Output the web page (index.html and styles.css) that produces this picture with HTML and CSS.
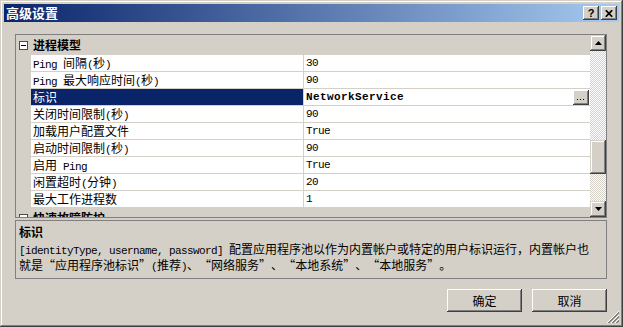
FILE: index.html
```html
<!DOCTYPE html>
<html lang="zh-CN">
<head>
<meta charset="utf-8">
<title>高级设置</title>
<link rel="stylesheet" href="styles.css">
</head>
<body>
<div class="window">
  <div class="titlebar">
    <span class="title">高级设置</span>
    <div class="tbtns">
      <div class="tbtn help">?</div>
      <div class="tbtn close">
        <svg width="8" height="7" viewBox="0 0 8 7"><path d="M0.8 0.2L7.2 6.8M7.2 0.2L0.8 6.8" stroke="#000" stroke-width="1.7" fill="none"/></svg>
      </div>
    </div>
  </div>
  <div class="content">
    <div class="grid">
      <div class="rows">
        <div class="cat">
          <svg class="toggle" width="9" height="9" viewBox="0 0 9 9"><rect x="0.5" y="0.5" width="8" height="8" fill="#fff" stroke="#4a4a4a"/><path d="M2 4.5h5" stroke="#000"/></svg>
          <span class="cat-name">进程模型</span>
        </div>
        <div class="row"><div class="gutter"></div><div class="label"><span class="lat">Ping </span>间隔<span class="lat">(</span>秒<span class="lat">)</span></div><div class="value lat">30</div></div>
        <div class="row"><div class="gutter"></div><div class="label"><span class="lat">Ping </span>最大响应时间<span class="lat">(</span>秒<span class="lat">)</span></div><div class="value lat">90</div></div>
        <div class="row selected"><div class="gutter"></div><div class="label">标识</div><div class="value lat strong"><span>NetworkService</span><div class="ellipsis"><svg width="9" height="2" viewBox="0 0 9 2"><rect x="0" y="0" width="1" height="1"/><rect x="3" y="0" width="1" height="1"/><rect x="6" y="0" width="1" height="1"/></svg></div></div></div>
        <div class="row"><div class="gutter"></div><div class="label">关闭时间限制<span class="lat">(</span>秒<span class="lat">)</span></div><div class="value lat">90</div></div>
        <div class="row"><div class="gutter"></div><div class="label">加载用户配置文件</div><div class="value lat">True</div></div>
        <div class="row"><div class="gutter"></div><div class="label">启动时间限制<span class="lat">(</span>秒<span class="lat">)</span></div><div class="value lat">90</div></div>
        <div class="row"><div class="gutter"></div><div class="label">启用<span class="lat"> Ping</span></div><div class="value lat">True</div></div>
        <div class="row"><div class="gutter"></div><div class="label">闲置超时<span class="lat">(</span>分钟<span class="lat">)</span></div><div class="value lat">20</div></div>
        <div class="row"><div class="gutter"></div><div class="label">最大工作进程数</div><div class="value lat">1</div></div>
        <div class="cat">
          <svg class="toggle" width="9" height="9" viewBox="0 0 9 9"><rect x="0.5" y="0.5" width="8" height="8" fill="#fff" stroke="#4a4a4a"/><path d="M2 4.5h5" stroke="#000"/></svg>
          <span class="cat-name">快速故障防护</span>
        </div>
      </div>
      <div class="vscroll">
        <div class="sbtn"><svg width="7" height="4" viewBox="0 0 7 4"><path d="M3.5 0L7 4H0z"/></svg></div>
        <div class="track-top"></div>
        <div class="thumb"></div>
        <div class="track-bottom"></div>
        <div class="sbtn"><svg width="7" height="4" viewBox="0 0 7 4"><path d="M0 0H7L3.5 4z"/></svg></div>
      </div>
    </div>
    <div class="desc">
      <div class="desc-title">标识</div>
      <div class="desc-text"><span class="lat">[identityType, username, password] </span>配置应用程序池以作为内置帐户或特定的用户标识运行，内置帐户也<br>就是<span class="ql">“</span>应用程序池标识<span class="qr">”</span><span class="lat">(</span>推荐<span class="lat">)</span>、<span class="ql">“</span>网络服务<span class="qr">”</span>、<span class="ql">“</span>本地系统<span class="qr">”</span>、<span class="ql">“</span>本地服务<span class="qr">”</span>。</div>
    </div>
    <div class="actions">
      <div class="btn">确定</div>
      <div class="btn">取消</div>
    </div>
  </div>
  <svg class="grip" width="12" height="12" viewBox="0 0 12 12">
    <path d="M12 0L0 12M12 4L4 12M12 8L8 12" stroke="#fff" fill="none"/>
    <path d="M12 1L1 12M12 2L2 12M12 5L5 12M12 6L6 12M12 9L9 12M12 10L10 12" stroke="#808080" fill="none"/>
  </svg>
</div>
</body>
</html>
```
FILE: styles.css
```css
* { box-sizing: border-box; margin: 0; padding: 0; }
html, body { width: 623px; height: 327px; overflow: hidden; }
body {
  font-family: "Noto Sans CJK SC", sans-serif;
  font-size: 12px;
  color: #000;
  background: #d4d0c8;
}
.lat {
  font-family: "Liberation Mono", "Noto Sans CJK SC", monospace;
  font-size: 11px;
  letter-spacing: -0.6px;
}
.window {
  position: relative;
  width: 623px;
  height: 327px;
  padding: 4px;
  background: #d4d0c8;
  box-shadow: inset -1px -1px #404040, inset 1px 1px #d4d0c8, inset -2px -2px #808080, inset 2px 2px #fff;
  display: flex;
  flex-direction: column;
}
.titlebar {
  height: 18px;
  flex: none;
  display: flex;
  align-items: center;
  justify-content: space-between;
  padding: 0 2px 0 2px;
  background: linear-gradient(to right, #0a246a, #a6caf0);
}
.title {
  color: #fff;
  font-weight: bold;
  font-size: 13px;
  line-height: 18px;
}
.tbtns { display: flex; gap: 2px; }
.tbtn {
  width: 16px;
  height: 14px;
  background: #d4d0c8;
  box-shadow: inset -1px -1px #404040, inset 1px 1px #fff, inset -2px -2px #808080, inset 2px 2px #d4d0c8;
  display: flex;
  align-items: center;
  justify-content: center;
}
.help {
  font-family: "Liberation Sans", sans-serif;
  font-weight: bold;
  font-size: 11px;
  line-height: 14px;
  padding-bottom: 1px;
}
.content {
  flex: 1;
  display: flex;
  flex-direction: column;
  padding: 12px 12px 0 11px;
}
.grid {
  height: 184px;
  border: 1px solid #808080;
  display: grid;
  grid-template-columns: 1fr 16px;
  background: #fff;
}
.rows { overflow: hidden; }
.cat {
  height: 20px;
  display: flex;
  align-items: center;
  background: #d4d0c8;
}
.toggle { margin-left: 3px; flex: none; }
.cat-name {
  margin-left: 5px;
  font-weight: bold;
  line-height: 20px;
}
.row {
  display: grid;
  grid-template-columns: 15px 272px 287px;
  height: 17px;
}
.gutter { background: #d4d0c8; }
.label, .value {
  border-bottom: 1px solid #d4d0c8;
  line-height: 16px;
  white-space: nowrap;
  overflow: hidden;
}
.label { padding-left: 2px; }
.value {
  border-left: 1px solid #d4d0c8;
  padding-left: 2px;
  display: flex;
  align-items: center;
  justify-content: space-between;
}
.row.selected .label { background: #0a246a; color: #fff; }
.strong { font-weight: bold; letter-spacing: 0.4px; }
.ellipsis {
  width: 16px;
  height: 15px;
  margin-right: 1px;
  background: #d4d0c8;
  box-shadow: inset -1px -1px #404040, inset 1px 1px #fff, inset -2px -2px #808080;
  display: flex;
  align-items: flex-end;
  justify-content: center;
  padding-bottom: 4px;
}
.vscroll {
  display: flex;
  flex-direction: column;
}
.sbtn {
  height: 16px;
  flex: none;
  background: #d4d0c8;
  box-shadow: inset -1px -1px #404040, inset 1px 1px #d4d0c8, inset -2px -2px #808080, inset 2px 2px #fff;
  display: flex;
  align-items: center;
  justify-content: center;
}
.track-top, .track-bottom {
  background: repeating-conic-gradient(#fff 0 25%, #d4d0c8 0 50%) 0 0 / 2px 2px;
}
.track-top { height: 89px; flex: none; }
.track-bottom { flex: 1; }
.thumb {
  height: 34px;
  flex: none;
  background: #d4d0c8;
  box-shadow: inset -1px -1px #404040, inset 1px 1px #d4d0c8, inset -2px -2px #808080, inset 2px 2px #fff;
}
.desc {
  margin-top: 2px;
  height: 59px;
  border: 1px solid #808080;
  padding: 3px 3px 2px;
}
.desc-title {
  font-weight: bold;
  line-height: 15px;
}
.desc-text {
  margin-top: 3px;
  line-height: 13px;
  white-space: nowrap;
}
.ql, .qr {
  display: inline-block;
  width: 12px;
}
.ql { text-align: right; }
.qr { text-align: left; }
.actions {
  margin-top: 10px;
  display: flex;
  justify-content: flex-end;
  gap: 10px;
}
.btn {
  width: 75px;
  height: 23px;
  background: #d4d0c8;
  box-shadow: inset -1px -1px #404040, inset 1px 1px #fff, inset -2px -2px #808080, inset 2px 2px #d4d0c8;
  display: flex;
  align-items: center;
  justify-content: center;
  line-height: 14px;
}
.grip {
  position: absolute;
  right: 4px;
  bottom: 4px;
}
```
